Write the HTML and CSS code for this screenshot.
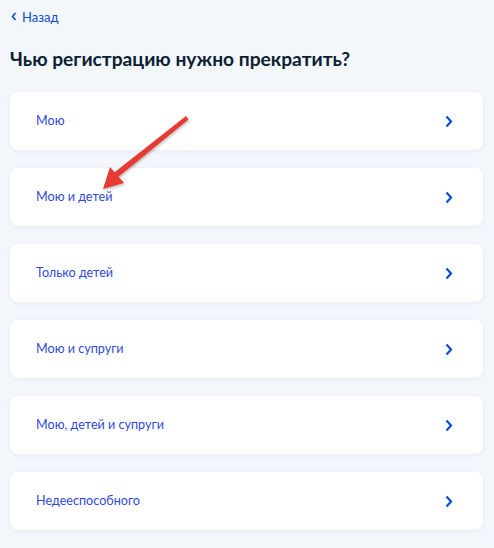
FILE: index.html
```html
<!DOCTYPE html>
<html lang="ru">
<head>
<meta charset="utf-8">
<link rel="stylesheet" href="styles.css">
</head>
<body>
<div class="page">
  <a class="back" href="#">
    <svg class="back-icon" width="6" height="9" viewBox="0 0 6 9"><path d="M4.5 1 L1.5 4.5 L4.5 8" fill="none" stroke="#0d4cd3" stroke-width="1.6"/></svg>
    <span>Назад</span>
  </a>
  <h1 class="title">Чью регистрацию нужно прекратить?</h1>
  <div class="list">
    <a class="item" href="#"><span>Мою</span><svg class="chev" width="8" height="13" viewBox="0 0 8 13"><path d="M1.5 1.5 L6 6.5 L1.5 11.5" fill="none" stroke="#0d4cd3" stroke-width="2.2"/></svg></a>
    <a class="item" href="#"><span>Мою и детей</span><svg class="chev" width="8" height="13" viewBox="0 0 8 13"><path d="M1.5 1.5 L6 6.5 L1.5 11.5" fill="none" stroke="#0d4cd3" stroke-width="2.2"/></svg></a>
    <a class="item" href="#"><span>Только детей</span><svg class="chev" width="8" height="13" viewBox="0 0 8 13"><path d="M1.5 1.5 L6 6.5 L1.5 11.5" fill="none" stroke="#0d4cd3" stroke-width="2.2"/></svg></a>
    <a class="item" href="#"><span>Мою и супруги</span><svg class="chev" width="8" height="13" viewBox="0 0 8 13"><path d="M1.5 1.5 L6 6.5 L1.5 11.5" fill="none" stroke="#0d4cd3" stroke-width="2.2"/></svg></a>
    <a class="item" href="#"><span>Мою, детей и супруги</span><svg class="chev" width="8" height="13" viewBox="0 0 8 13"><path d="M1.5 1.5 L6 6.5 L1.5 11.5" fill="none" stroke="#0d4cd3" stroke-width="2.2"/></svg></a>
    <a class="item" href="#"><span>Недееспособного</span><svg class="chev" width="8" height="13" viewBox="0 0 8 13"><path d="M1.5 1.5 L6 6.5 L1.5 11.5" fill="none" stroke="#0d4cd3" stroke-width="2.2"/></svg></a>
  </div>
  <svg class="arrow" width="494" height="548" viewBox="0 0 494 548">
    <defs>
      <filter id="sh" x="-20%" y="-20%" width="140%" height="140%">
        <feDropShadow dx="1" dy="1.5" stdDeviation="1.2" flood-color="#000" flood-opacity="0.25"/>
      </filter>
    </defs>
    <g filter="url(#sh)" fill="#e53a32">
      <path d="M186 116 L188.5 119.5 L117 178 L113 173.5 Z"/>
      <path d="M103 189 L110 167 L124 183 Z"/>
    </g>
  </svg>
</div>
</body>
</html>
```
FILE: styles.css
```css
html, body {
  margin: 0;
  padding: 0;
  background: #f3f6fb;
}
body {
  font-family: Lato, "Noto Sans", Arial, sans-serif;
  width: 494px;
  height: 548px;
  overflow: hidden;
}
.page {
  position: relative;
  padding: 8px 11px 0 10px;
}
.back {
  display: flex;
  align-items: center;
  gap: 5px;
  color: #0d4cd3;
  font-size: 13px;
  text-decoration: none;
  height: 17px;
  padding-left: 1px;
}
.back-icon {
  display: block;
}
.title {
  margin: 22px 0 0;
  font-size: 19.2px;
  line-height: 24px;
  font-weight: 700;
  color: #0b1f33;
}
.list {
  margin-top: 21px;
  display: flex;
  flex-direction: column;
  gap: 18px;
}
.item {
  display: flex;
  align-items: center;
  justify-content: space-between;
  height: 58px;
  padding: 0 30px 0 26px;
  background: #fff;
  border-radius: 8px;
  box-shadow: 0 1px 4px rgba(40, 70, 140, 0.07);
  color: #3049d9;
  font-size: 12.6px;
  text-decoration: none;
}
.item span {
  margin-top: -1px;
}
.chev {
  display: block;
}
.arrow {
  position: absolute;
  left: 0;
  top: 0;
  pointer-events: none;
}
```
